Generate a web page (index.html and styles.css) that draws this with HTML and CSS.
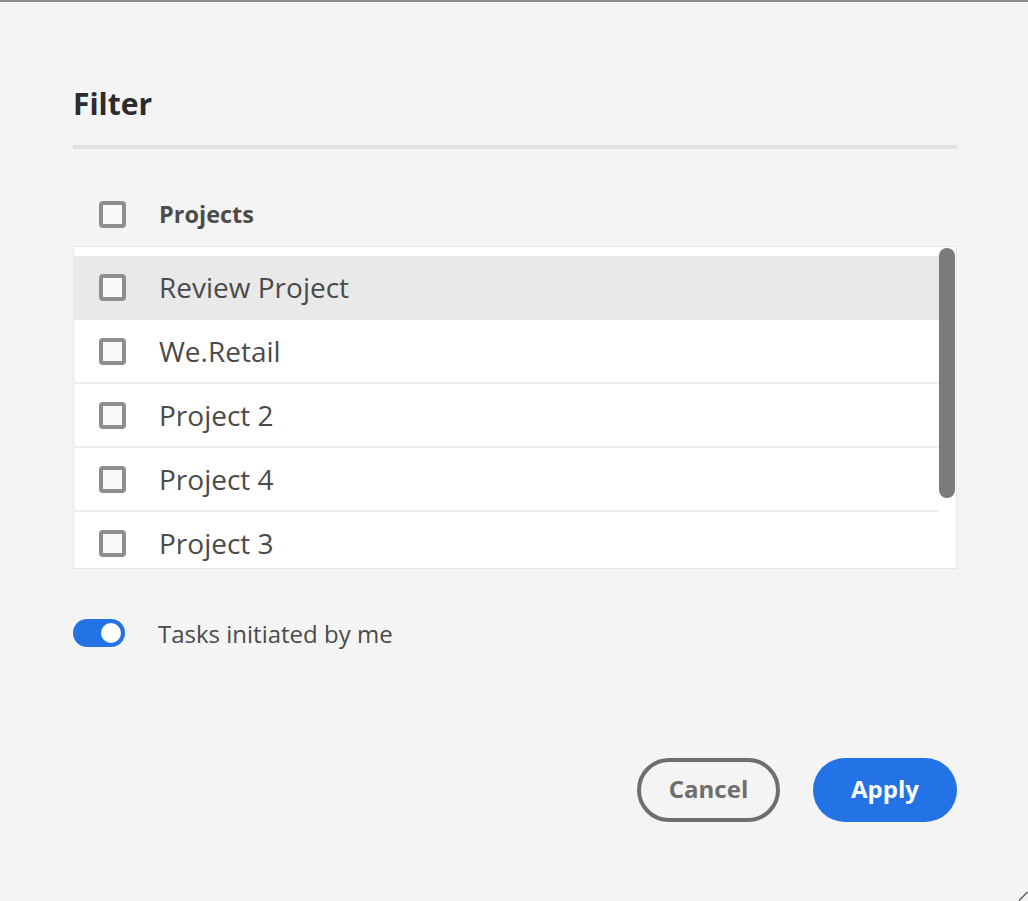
FILE: index.html
```html
<!DOCTYPE html>
<html lang="en">
<head>
<meta charset="utf-8">
<title>Filter</title>
<link rel="stylesheet" href="styles.css">
</head>
<body>
<div class="dialog">
  <h1 class="title">Filter</h1>
  <div class="divider"></div>
  <div class="group-head">
    <span class="checkbox"></span>
    <span class="group-label">Projects</span>
  </div>
  <div class="listbox">
    <div class="items">
      <div class="item hover"><span class="checkbox"></span><span class="item-label">Review Project</span></div>
      <div class="item"><span class="checkbox"></span><span class="item-label">We.Retail</span></div>
      <div class="item"><span class="checkbox"></span><span class="item-label">Project 2</span></div>
      <div class="item"><span class="checkbox"></span><span class="item-label">Project 4</span></div>
      <div class="item"><span class="checkbox"></span><span class="item-label">Project 3</span></div>
    </div>
    <div class="scrollbar"><div class="thumb"></div></div>
  </div>
  <div class="toggle-row">
    <span class="switch"><span class="knob"></span></span>
    <span class="toggle-label">Tasks initiated by me</span>
  </div>
  <div class="actions">
    <button class="btn btn-secondary">Cancel</button>
    <button class="btn btn-primary">Apply</button>
  </div>
</div>
<svg class="resize" width="10" height="10" viewBox="0 0 10 10"><line x1="1" y1="9.5" x2="9.5" y2="1" stroke="#5a5a5a" stroke-width="1.5"/></svg>
</body>
</html>
```
FILE: styles.css
```css
html, body {
  margin: 0;
  padding: 0;
}
body {
  background: #f4f4f4;
  border-top: 2px solid #8f8f8f;
  height: 899px;
  overflow: hidden;
  font-family: "Open Sans", "Noto Sans", sans-serif;
  color: #4b4b4b;
}
.dialog {
  padding: 0 71px 0 73px;
}
.title {
  margin: 82px 0 0 0;
  height: 40px;
  line-height: 40px;
  font-size: 30px;
  font-weight: 700;
  color: #2c2c2c;
}
.divider {
  margin-top: 21px;
  height: 4px;
  background: #e1e1e1;
}
.group-head {
  margin-top: 33px;
  height: 64px;
  display: flex;
  align-items: center;
  padding-left: 26px;
}
.checkbox {
  box-sizing: border-box;
  width: 27px;
  height: 27px;
  border: 4px solid #8e8e8e;
  border-radius: 4px;
  background: #fafafa;
  flex: none;
}
.group-label {
  margin-left: 33px;
  font-size: 23.5px;
  font-weight: 700;
  color: #4b4b4b;
}
.listbox {
  box-sizing: border-box;
  height: 323px;
  border: 1px solid #e6e6e6;
  background: #ffffff;
  display: flex;
}
.items {
  flex: 1;
  padding-top: 9px;
  overflow: hidden;
}
.item {
  box-sizing: border-box;
  height: 64px;
  display: flex;
  align-items: center;
  padding-left: 25px;
  border-bottom: 2px solid #ececec;
}
.item.hover {
  background: #e9e9e9;
  border-bottom-color: #e9e9e9;
}
.item-label {
  margin-left: 33px;
  font-size: 28px;
  color: #4b4b4b;
}
.scrollbar {
  width: 17px;
  flex: none;
}
.thumb {
  width: 16px;
  height: 250px;
  margin-top: 1px;
  border-radius: 8px;
  background: #7b7b7b;
}
.toggle-row {
  margin-top: 50px;
  height: 28px;
  display: flex;
  align-items: center;
}
.switch {
  box-sizing: border-box;
  width: 52px;
  height: 28px;
  border-radius: 14px;
  background: #2473e6;
  display: flex;
  align-items: center;
  justify-content: flex-end;
  padding-right: 4px;
}
.knob {
  width: 20px;
  height: 20px;
  border-radius: 50%;
  background: #ffffff;
}
.toggle-label {
  margin-left: 33px;
  font-size: 24px;
  color: #4b4b4b;
}
.actions {
  margin-top: 111px;
  display: flex;
  justify-content: flex-end;
  gap: 33px;
}
.btn {
  box-sizing: border-box;
  height: 64px;
  border-radius: 32px;
  font-family: "Open Sans", "Noto Sans", sans-serif;
  font-size: 24px;
  font-weight: 700;
  padding: 0 0 3px 0;
  cursor: pointer;
}
.btn-secondary {
  width: 143px;
  border: 4px solid #6e6e6e;
  background: transparent;
  color: #6e6e6e;
}
.btn-primary {
  width: 144px;
  border: none;
  background: #2473e6;
  color: #ffffff;
}
.resize {
  position: absolute;
  right: 0;
  bottom: 0;
}
```
